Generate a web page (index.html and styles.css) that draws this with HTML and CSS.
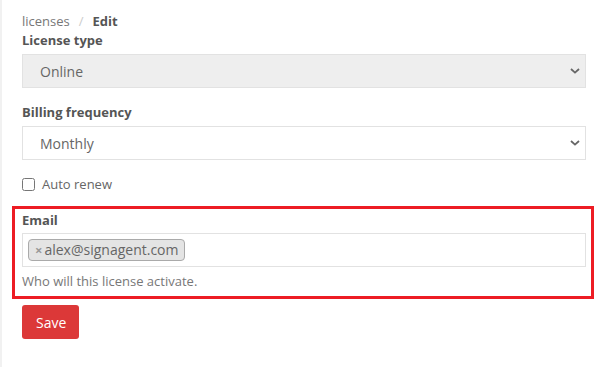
FILE: index.html
```html
<!DOCTYPE html>
<html>
<head>
<meta charset="utf-8">
<link rel="stylesheet" href="styles.css">
</head>
<body>
<div class="page">
  <div class="breadcrumb"><span class="crumb">licenses</span><span class="sep">/</span><span class="current">Edit</span></div>
  <div class="group">
    <label class="label">License type</label>
    <div class="select-wrap">
      <select class="select disabled" disabled><option>Online</option></select>
      <svg class="chev" width="10" height="6" viewBox="0 0 10 6"><path d="M1 1 L5 4.6 L9 1" fill="none" stroke="#666" stroke-width="1.8"/></svg>
    </div>
  </div>
  <div class="group">
    <label class="label">Billing frequency</label>
    <div class="select-wrap">
      <select class="select"><option>Monthly</option></select>
      <svg class="chev" width="10" height="6" viewBox="0 0 10 6"><path d="M1 1 L5 4.6 L9 1" fill="none" stroke="#666" stroke-width="1.8"/></svg>
    </div>
  </div>
  <div class="check-row">
    <input type="checkbox" class="check" id="ar"><label for="ar" class="check-label">Auto renew</label>
  </div>
  <div class="highlight">
    <label class="label email-label">Email</label>
    <div class="tag-input">
      <span class="tag"><span class="tag-x">×</span>alex@signagent.com</span>
    </div>
    <div class="help">Who will this license activate.</div>
  </div>
  <button class="btn">Save</button>
</div>
</body>
</html>
```
FILE: styles.css
```css
* { box-sizing: border-box; }
html, body { margin: 0; padding: 0; background: #fff; }
body { font-family: "Open Sans", "Liberation Sans", sans-serif; color: #555; }
.page {
  min-height: 367px;
  border-left: 2px solid #f1f1f1;
  padding: 12px 19px 0 20px;
}
.breadcrumb { font-size: 13px; line-height: 19px; color: #777; }
.sep { color: #ccc; margin: 0 9px; }
.current { font-weight: 700; color: #555; }
.group { margin-bottom: 15px; }
.label { display: block; font-size: 13px; font-weight: 700; line-height: 19px; margin-bottom: 4px; color: #555; }
.select-wrap { position: relative; }
.select {
  -webkit-appearance: none; appearance: none;
  display: block; width: 100%; height: 34px;
  border: 1px solid #e2e2e2; border-radius: 0;
  background: #fff; color: #666;
  font-family: inherit; font-size: 14px;
  padding: 0 0 0 17px; margin: 0;
}
.select.disabled { background: #eee; opacity: 1; color: #666; }
.chev { position: absolute; right: 6px; top: 14px; }
.check-row { display: flex; align-items: center; height: 19px; margin-bottom: 12px; }
.check { width: 13px; height: 13px; margin: 0 7px 0 0; }
.check-label { font-size: 13px; line-height: 19px; color: #666; }
.highlight {
  border: 3px solid #ed1c24;
  margin: 0 -8px 0 -10px;
  padding: 2px 5px 5px 7px;
}
.email-label { margin-bottom: 3px; }
.tag-input {
  height: 34px; border: 1px solid #e2e2e2; background: #fff;
  padding: 5px 5px 0;
  display: flex; align-items: flex-start;
}
.tag {
  display: inline-flex; align-items: center;
  height: 22px; background: #e4e4e4;
  border: 1px solid #aaa; border-radius: 4px;
  padding: 0 6px 0 6px;
  font-size: 14px; color: #666; line-height: 20px;
}
.tag-x { color: #999; font-size: 13px; font-weight: 700; margin-right: 2px; }
.help { font-size: 13px; line-height: 19px; margin-top: 5px; color: #777; }
.btn {
  display: block; margin-top: 6px;
  height: 34px; padding: 0 13px 0 14px;
  background: #dc3838; color: #fff; border: 0; border-radius: 3px;
  font-family: inherit; font-size: 14px;
}
```
